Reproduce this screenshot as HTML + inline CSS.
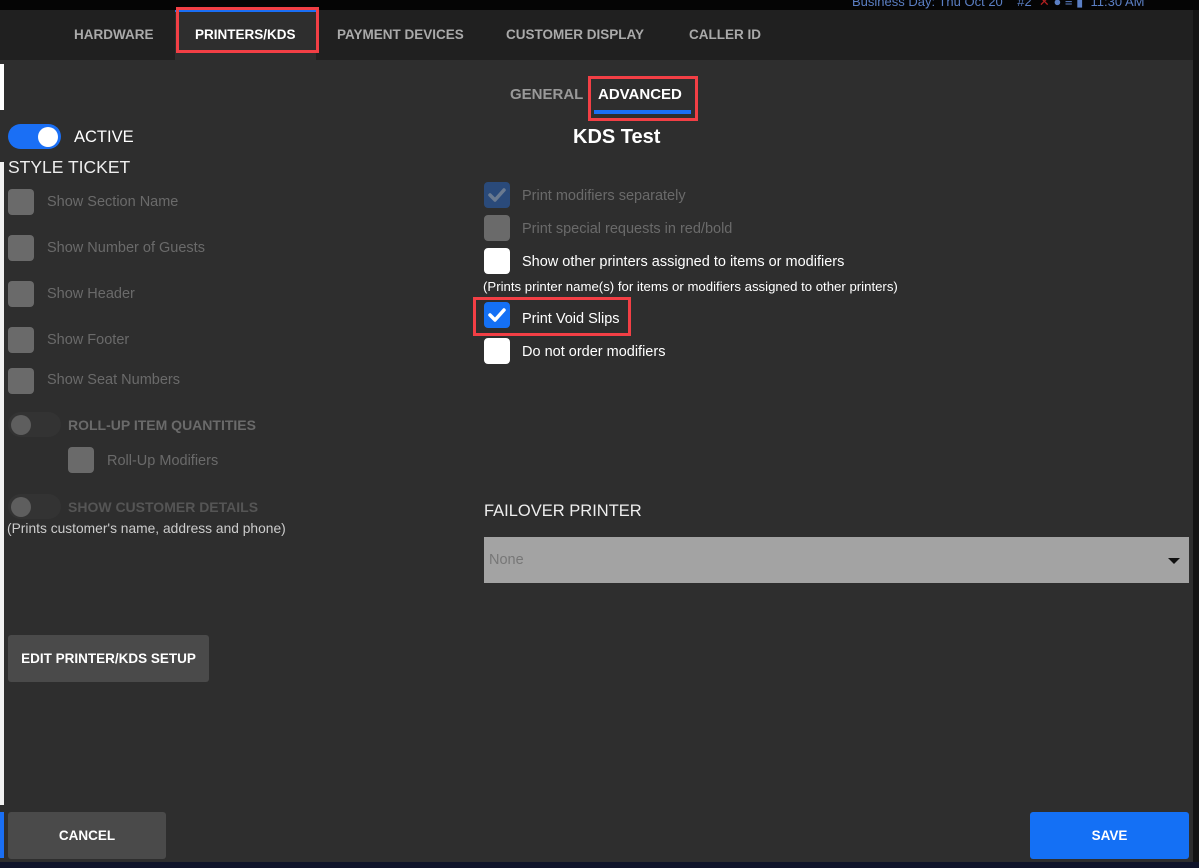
<!DOCTYPE html>
<html><head><meta charset="utf-8"><style>
*{margin:0;padding:0;box-sizing:border-box}
body{width:1199px;height:868px;background:#2e2e2e;font-family:"Liberation Sans",sans-serif;position:relative;overflow:hidden;color:#fff}
.a{position:absolute;white-space:nowrap}
.tab{font-weight:bold;font-size:13.5px;color:#aaa;top:27px}
.cb{position:absolute;width:26px;height:26px;border-radius:4px;background:#6a6a6a}
.lt{font-size:14.5px;color:#6a6a6a}
.wb{background:#fff}
</style></head><body>
<div class="a" style="left:0;top:0;width:1199px;height:10px;background:#050505"></div>
<div class="a" style="left:852px;top:-6px;font-size:13px;color:#5b7fc4">Business Day: Thu Oct 20 &nbsp;&nbsp; #2 &nbsp;<span style="color:#b02020">✕</span> ● ≡ ▮ &nbsp;11:30 AM</div>
<div class="a" style="left:0;top:10px;width:1199px;height:50px;background:#202020"></div>
<div class="a" style="left:175px;top:10px;width:141px;height:50px;background:#2e2e2e;border-top:2px solid #1a6ff5"></div>
<div class="a" style="left:176px;top:7px;width:143px;height:46px;border:3px solid #f23f45"></div>
<div class="a tab" style="left:74px">HARDWARE</div>
<div class="a tab" style="left:195px;color:#fff">PRINTERS/KDS</div>
<div class="a tab" style="left:337px">PAYMENT DEVICES</div>
<div class="a tab" style="left:506px">CUSTOMER DISPLAY</div>
<div class="a tab" style="left:689px">CALLER ID</div>
<div class="a" style="left:0;top:64px;width:4px;height:46px;background:#fff"></div>
<div class="a" style="left:0;top:162px;width:4px;height:643px;background:#f2f2f2"></div>
<div class="a" style="left:0;top:812px;width:4px;height:46px;background:#1a6ff5"></div>
<div class="a" style="left:1193px;top:10px;width:6px;height:858px;background:#141414"></div>
<div class="a" style="left:0;top:862px;width:1199px;height:6px;background:#10142a"></div>

<div class="a" style="left:8px;top:124px;width:53px;height:25px;border-radius:13px;background:#1a6ff5"></div>
<div class="a" style="left:38px;top:127px;width:20px;height:20px;border-radius:50%;background:#fff"></div>
<div class="a" style="left:74px;top:128px;font-size:16.5px">ACTIVE</div>
<div class="a" style="left:8px;top:157px;font-size:17.5px;color:#eee">STYLE TICKET</div>
<div class="cb" style="left:8px;top:189px"></div><div class="a lt" style="left:47px;top:194px">Show Section Name</div>
<div class="cb" style="left:8px;top:235px"></div><div class="a lt" style="left:47px;top:240px">Show Number of Guests</div>
<div class="cb" style="left:8px;top:281px"></div><div class="a lt" style="left:47px;top:286px">Show Header</div>
<div class="cb" style="left:8px;top:327px"></div><div class="a lt" style="left:47px;top:332px">Show Footer</div>
<div class="cb" style="left:8px;top:368px"></div><div class="a lt" style="left:47px;top:372px">Show Seat Numbers</div>
<div class="a" style="left:8px;top:412px;width:53px;height:25px;border-radius:13px;background:#333"></div>
<div class="a" style="left:11px;top:415px;width:20px;height:20px;border-radius:50%;background:#5e5e5e"></div>
<div class="a" style="left:68px;top:417px;font-size:14px;font-weight:bold;color:#6a6a6a">ROLL-UP ITEM QUANTITIES</div>
<div class="cb" style="left:68px;top:447px"></div><div class="a lt" style="left:107px;top:453px">Roll-Up Modifiers</div>
<div class="a" style="left:8px;top:494px;width:53px;height:25px;border-radius:13px;background:#333"></div>
<div class="a" style="left:11px;top:497px;width:20px;height:20px;border-radius:50%;background:#5e5e5e"></div>
<div class="a" style="left:68px;top:499px;font-size:14px;font-weight:bold;color:#555">SHOW CUSTOMER DETAILS</div>
<div class="a" style="left:7px;top:521px;font-size:13.8px;color:#ccc">(Prints customer's name, address and phone)</div>
<div class="a" style="left:8px;top:635px;width:201px;height:47px;border-radius:3px;background:#4a4a4a;font-size:13.5px;font-weight:bold;text-align:center;line-height:47px">EDIT PRINTER/KDS SETUP</div>
<div class="a" style="left:8px;top:812px;width:158px;height:47px;border-radius:3px;background:#4a4a4a;font-size:13.5px;font-weight:bold;text-align:center;line-height:47px">CANCEL</div>
<div class="a" style="left:1030px;top:812px;width:159px;height:47px;border-radius:3px;background:#1470f5;font-size:13.5px;font-weight:bold;text-align:center;line-height:47px">SAVE</div>

<div class="a" style="left:510px;top:86px;font-size:15px;font-weight:bold;color:#999">GENERAL</div>
<div class="a" style="left:598px;top:86px;font-size:15px;font-weight:bold">ADVANCED</div>
<div class="a" style="left:594px;top:110px;width:97px;height:4px;background:#1a6ff5"></div>
<div class="a" style="left:588px;top:76px;width:110px;height:45px;border:3px solid #f23f45"></div>
<div class="a" style="left:573px;top:126px;font-size:20px;font-weight:bold">KDS Test</div>

<div class="cb" style="left:484px;top:182px;background:#2a4a7a"><svg width="26" height="26"><path d="M6 13l5 5 9-10" stroke="#6a7a90" stroke-width="3.5" fill="none" stroke-linecap="round" stroke-linejoin="round"/></svg></div>
<div class="a lt" style="left:522px;top:188px">Print modifiers separately</div>
<div class="cb" style="left:484px;top:215px"></div><div class="a lt" style="left:522px;top:221px">Print special requests in red/bold</div>
<div class="cb wb" style="left:484px;top:248px"></div><div class="a" style="left:522px;top:254px;font-size:14.5px">Show other printers assigned to items or modifiers</div>
<div class="a" style="left:483px;top:279px;font-size:13.2px">(Prints printer name(s) for items or modifiers assigned to other printers)</div>
<div class="cb" style="left:484px;top:302px;background:#1470f5"><svg width="26" height="26"><path d="M6 13l5 5 9-10" stroke="#fff" stroke-width="3.5" fill="none" stroke-linecap="round" stroke-linejoin="round"/></svg></div>
<div class="a" style="left:522px;top:311px;font-size:14.5px">Print Void Slips</div>
<div class="a" style="left:473px;top:297px;width:158px;height:39px;border:3px solid #f23f45"></div>
<div class="cb wb" style="left:484px;top:338px"></div><div class="a" style="left:522px;top:344px;font-size:14.5px">Do not order modifiers</div>

<div class="a" style="left:484px;top:502px;font-size:16.5px;color:#eee">FAILOVER PRINTER</div>
<div class="a" style="left:484px;top:537px;width:705px;height:46px;background:#a3a3a3"></div>
<div class="a" style="left:489px;top:552px;font-size:14.5px;color:#777">None</div>
<div class="a" style="left:1168px;top:558px;width:0;height:0;border-left:6px solid transparent;border-right:6px solid transparent;border-top:6px solid #111"></div>
</body></html>
